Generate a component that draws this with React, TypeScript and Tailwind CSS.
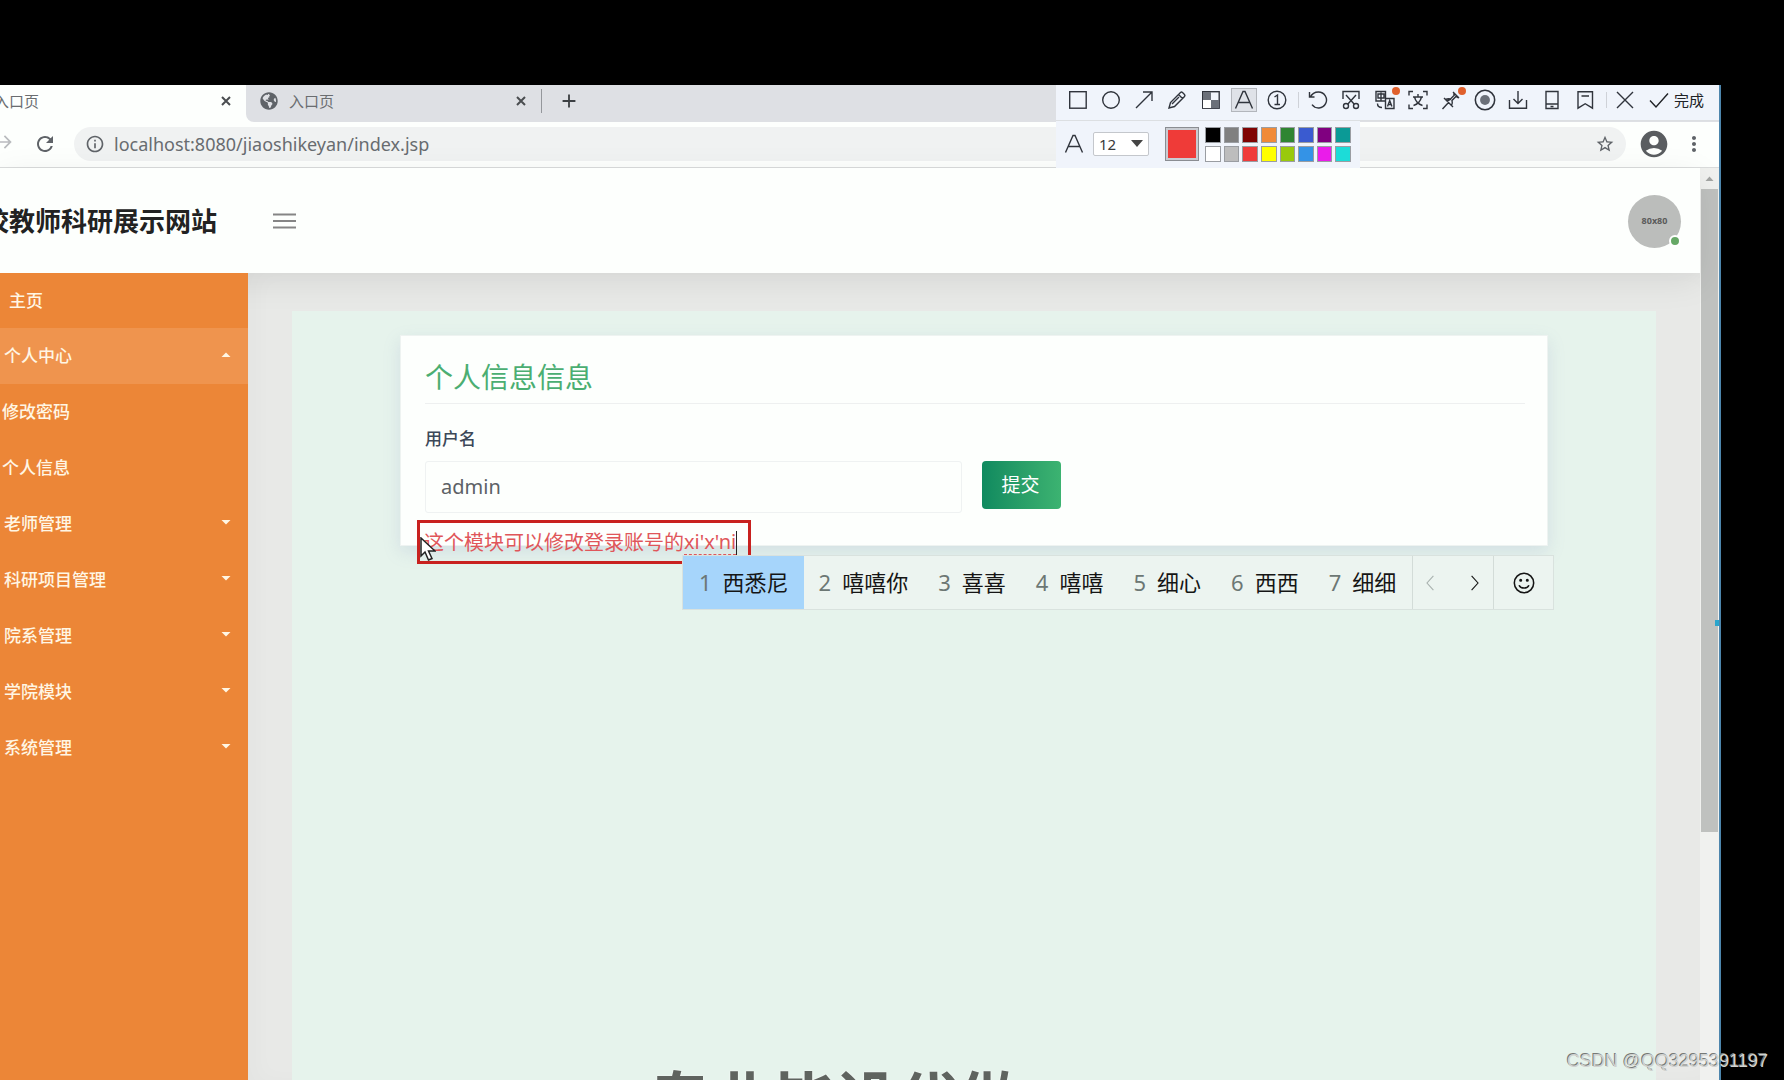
import type { ReactNode } from 'react';
import { FaGlobeAmericas } from 'react-icons/fa';
import { MdAccountCircle, MdMoreVert, MdRefresh, MdStarBorder, MdAdd, MdArrowBack, MdArrowForward, MdInfoOutline } from 'react-icons/md';

const menuItems = [
  { title: '主页', row: 'h-[55px] pl-[9px]', caret: '' },
  { title: '个人中心', row: 'h-14 pl-1 bg-[#ef944e]', caret: 'up' },
  { title: '修改密码', row: 'h-14 pl-[2px]', caret: '' },
  { title: '个人信息', row: 'h-14 pl-[2px]', caret: '' },
  { title: '老师管理', row: 'h-14 pl-1', caret: 'down' },
  { title: '科研项目管理', row: 'h-14 pl-1', caret: 'down' },
  { title: '院系管理', row: 'h-14 pl-1', caret: 'down' },
  { title: '学院模块', row: 'h-14 pl-1', caret: 'down' },
  { title: '系统管理', row: 'h-14 pl-1', caret: 'down' },
];

const candidates = ['西悉尼', '嘻嘻你', '喜喜', '嘻嘻', '细心', '西西', '细细'];

const swatches = [
  { name: 'black', color: 'bg-black' },
  { name: 'gray', color: 'bg-[#808080]' },
  { name: 'maroon', color: 'bg-[#7f0303]' },
  { name: 'orange', color: 'bg-[#f08a38]' },
  { name: 'green', color: 'bg-[#2f8532]' },
  { name: 'blue', color: 'bg-[#3a5bd0]' },
  { name: 'purple', color: 'bg-[#800080]' },
  { name: 'teal', color: 'bg-[#0b9a96]' },
  { name: 'white', color: 'bg-white' },
  { name: 'silver', color: 'bg-[#bdbdbd]' },
  { name: 'red', color: 'bg-[#ef3b3b]' },
  { name: 'yellow', color: 'bg-[#ffff00]' },
  { name: 'lime', color: 'bg-[#99c90c]' },
  { name: 'sky', color: 'bg-[#3493e6]' },
  { name: 'magenta', color: 'bg-[#ea1cea]' },
  { name: 'cyan', color: 'bg-[#1cdcd8]' },
];

function Icon({ children, size = 'size-5' }: { children: ReactNode; size?: string }) {
  return (
    <svg viewBox="0 0 20 20" fill="none" stroke="currentColor" strokeWidth="1.4" className={size}>
      {children}
    </svg>
  );
}

function LetterA({ size = 'size-5' }: { size?: string }) {
  return (
    <Icon size={size}>
      <path d="M1.5 18.5 9 1.5h2l7.500 17M4.300 12.500h11.400" />
    </Icon>
  );
}

const drawTools = [
  { name: '矩形', icon: <Icon><rect x="1.700" y="1.700" width="16.500" height="16.500" /></Icon> },
  { name: '椭圆', icon: <Icon><circle cx="10" cy="10" r="8.300" /></Icon> },
  { name: '箭头', icon: <Icon><path d="M2 18 18 2M9 2h9v9" /></Icon> },
  { name: '画笔', icon: <Icon><path d="m2 18 1.500-5.500L13.500 2.500a1.500 1.500 0 0 1 2 0l2 2a1.500 1.500 0 0 1 0 2L7.500 16.500 2 18ZM11.500 4.500l4 4M5 14l7-7" /></Icon> },
  {
    name: '马赛克',
    icon: (
      <Icon>
        <rect x="1.700" y="1.700" width="16.500" height="16.500" />
        <path d="M2 2h8v8H2zM10 10h8v8h-8z" fill="#6b7079" stroke="none" />
        <path d="M2 10h8v8H2z" fill="#fff" stroke="none" />
      </Icon>
    ),
  },
  { name: '文字', icon: <LetterA /> },
  { name: '序号', icon: <Icon><circle cx="10" cy="10" r="8.800" /><path d="M7.500 7 10.500 5v9.500M7.500 14.500h5.500" /></Icon> },
];

const moreTools = [
  { name: '撤销', dot: false, icon: <Icon><path d="M1.500 2v5h5M2 7.500C4 3.500 7 2 10.500 2a8 8 0 1 1-6.500 12.700" /></Icon> },
  {
    name: '裁剪',
    dot: false,
    icon: (
      <Icon>
        <path d="M2 9V1.500h16V9M5 5l8.300 9.300M15 5l-8.300 9.300" />
        <circle cx="5" cy="16" r="2.500" />
        <circle cx="15" cy="16" r="2.500" />
      </Icon>
    ),
  },
  {
    name: '翻译',
    dot: true,
    icon: (
      <Icon>
        <path d="M10 11H1V1.500h9.500V8M3 4h6v4H3zM6 2.500V11M10.500 8.500h8.500V18.500h-8.500zM12.500 16.500l2.200-6 2.200 6M13.300 14.500h3M2.500 13.500c0 2.500 1.500 4 4.500 4" />
      </Icon>
    ),
  },
  {
    name: '文字识别',
    dot: false,
    icon: (
      <Icon>
        <path d="M1 5.500V1.500h4M15 1.500h4v4M19 14.500v4h-4M5 18.500H1v-4M10 4v2.500M5 7h10M13.500 7C12.500 11 9 14.500 5.500 15.500M6.500 7c1 4 4.500 7.500 8 8.500" />
      </Icon>
    ),
  },
  { name: '钉住', dot: true, icon: <Icon><path d="m1.500 19 6-6.500M3 8l9 9M4.500 9.500c2-1 3.500-1 5-.5l4-4-1-1.500M10.500 15.500c1-2 1-3.500.5-5l4-4 2.500 1.500M12 2l6 6M6 11l4-2" /></Icon> },
  { name: '录制', dot: false, icon: <Icon size="size-[22px]"><circle cx="10" cy="10" r="8.800" /><circle cx="10" cy="10" r="4.500" fill="#6b7079" stroke="none" /></Icon> },
  { name: '下载', dot: false, icon: <Icon><path d="M1.500 10v8.300h17V10M10 1v12.500M5.500 9l4.500 4.500L14.500 9" /></Icon> },
  { name: '手机', dot: false, icon: <Icon><path d="M4 1.500h12v17H4zM4 14h12M8.500 16.500h3" /></Icon> },
  { name: '收藏', dot: false, icon: <Icon><path d="M3 1.700h14.500v16.500l-7.300-4.500L3 18.200zM6.500 6h7.500" /></Icon> },
];

function Tab({ active }: { active: boolean }) {
  return (
    <div className={active ? 'flex h-full w-[295px] items-center bg-[#fdfffd] pb-[5px] pl-[14px] pr-[10px]' : 'flex h-full w-[295px] items-center rounded-bl-lg bg-[#dee0e4] pb-[5px] pl-[14px] pr-[10px]'}>
      <FaGlobeAmericas className="size-[18px] text-[#5f6368]" />
      <span className="ml-[11px] flex-1 text-[15px] leading-6 text-[#6a6d70]">入口页</span>
      <button aria-label="关闭标签页" className="flex size-5 items-center justify-center text-[#4a4d50]">
        <svg viewBox="0 0 10 10" className="size-[10px]"><path d="m1 1 8 8M9 1 1 9" stroke="currentColor" strokeWidth="2" /></svg>
      </button>
    </div>
  );
}

function BrowserBar() {
  return (
    <div className="shrink-0">
      <div className="flex h-[37px] bg-[#fdfffd]">
        <div className="-ml-[49px] flex"><Tab active /><Tab active={false} /></div>
        <div className="flex flex-1 items-center bg-[#dee0e4] pb-[5px]">
          <span className="h-6 w-px bg-[#94979b]"></span>
          <button aria-label="新标签页" className="ml-4 text-[#3c4043]"><MdAdd className="size-[22px]" /></button>
        </div>
      </div>
      <div className="flex h-[46px] items-center border-b border-[#dadcdc] bg-[#fdfffd] pb-px pr-[13px]">
        <div className="-ml-[55px] flex text-[#5f6368]">
          <button aria-label="后退" className="flex w-10 justify-center text-[#b9bbbe]"><MdArrowBack className="size-5" /></button>
          <button aria-label="前进" className="flex w-10 justify-center text-[#b9bbbe]"><MdArrowForward className="size-5" /></button>
          <button aria-label="刷新" className="flex w-10 justify-center"><MdRefresh className="size-6" /></button>
        </div>
        <div className="ml-[9px] flex h-[34px] flex-1 items-center rounded-full bg-[#f0f2f2] px-[11px]">
          <MdInfoOutline className="size-5 text-[#5f6368]" />
          <input aria-label="地址" defaultValue="localhost:8080/jiaoshikeyan/index.jsp" className="ml-[9px] h-7 min-w-0 flex-1 bg-transparent pb-px text-[18px] leading-6 text-[#686c70]" />
          <button aria-label="收藏此页" className="text-[#5f6368]"><MdStarBorder className="size-5" /></button>
        </div>
        <button aria-label="用户" className="ml-3 text-[#5a5d60]"><MdAccountCircle className="size-8" /></button>
        <button aria-label="更多" className="ml-3 text-[#5f6368]"><MdMoreVert className="size-6" /></button>
      </div>
    </div>
  );
}

function CaptureToolbar() {
  return (
    <div className="absolute right-0 top-0 z-30 w-[663px] text-[#30343c]">
      <div className="flex h-[36px] items-center border-b border-[#dcdfe2] bg-[#f0f4fb] pb-[6px] pl-[5px]">
        <div className="grid w-[233px] grid-cols-7">
          {drawTools.map((tool) => (
            <button key={tool.name} aria-label={tool.name} className={tool.name === '文字' ? 'mx-auto flex h-6 w-[26px] items-center justify-center border border-[#b3b6bc] bg-[#dfe2e8]' : 'mx-auto flex h-6 w-[26px] items-center justify-center'}>
              {tool.icon}
            </button>
          ))}
        </div>
        <span className="ml-1 h-4 w-px bg-[#cfd2d8]"></span>
        <div className="ml-[2px] grid w-[301px] grid-cols-9">
          {moreTools.map((tool) => (
            <button key={tool.name} aria-label={tool.name} className="relative mx-auto flex size-6 items-center justify-center">
              {tool.icon}
              {tool.dot && <span className="absolute -right-[3px] -top-px size-2 rounded-full bg-[#e0602c]"></span>}
            </button>
          ))}
        </div>
        <span className="ml-1 h-4 w-px bg-[#cfd2d8]"></span>
        <button aria-label="取消" className="ml-2"><Icon><path d="m2 2 16 16M18 2 2 18" /></Icon></button>
        <button className="ml-[14px] flex items-center gap-[5px] text-[15px] leading-5 text-[#202226]">
          <Icon><path d="m1 10.500 6 6.500L19 3.500" /></Icon>
          完成
        </button>
      </div>
      <div className="flex h-[47px] w-[304px] items-center bg-[#f0f4fb] pb-px pl-2">
        <LetterA />
        <div className="relative ml-[9px] flex">
          <select aria-label="字号" className="h-6 w-14 appearance-none rounded-[2px] border border-[#c4c7cc] bg-white pl-[5px] text-[15px] leading-5 text-[#3a3a3a]">
            <option>12</option>
          </select>
          <svg viewBox="0 0 12 7" className="pointer-events-none absolute right-[6px] top-[8px] h-[7px] w-3"><path d="M0 0h12L6 7z" fill="#444" /></svg>
        </div>
        <button aria-label="当前颜色" className="ml-4 size-[34px] border border-[#8a8d92] bg-[#ef3b38] shadow-[inset_0_0_0_2px_#c9ccd2]"></button>
        <div className="ml-[6px] grid w-[146px] grid-cols-8 gap-[3px]">
          {swatches.map((s) => (
            <button key={s.name} aria-label={s.name} className={`h-4 border border-[#9a9da2] ${s.color}`}></button>
          ))}
        </div>
      </div>
    </div>
  );
}

function Sidebar() {
  return (
    <nav className="z-20 w-[248px] shrink-0 bg-[#ec8637] text-[17px] font-medium text-[#fff6e4]">
      {menuItems.map((item) => (
        <a key={item.title} href="#" className={`flex items-center justify-between pr-[17px] leading-6 ${item.row}`}>
          {item.title}
          {item.caret && (
            <svg viewBox="0 0 10 5" className="mb-1 h-[5px] w-[10px]">
              <path d={item.caret === 'up' ? 'M.500 5 5 .500 9.500 5z' : 'M.500 0h9L5 4.500z'} fill="currentColor" />
            </svg>
          )}
        </a>
      ))}
    </nav>
  );
}

function Annotation() {
  return (
    <div className="absolute left-4 top-[184px] flex h-11 w-[334px] items-center border-[3px] border-[#c8211f] pl-1 pt-px text-[20px] leading-6 text-[#e0565a]">
      <span>这个模块可以修改登录账号的</span>
      <span className="border-b border-dashed border-[#e0565a]">xi'x'ni</span>
      <span className="h-6 w-px bg-[#222]"></span>
    </div>
  );
}

function CandidateBar() {
  return (
    <div className="absolute left-[281px] top-[219px] flex h-[55px] w-[872px] border border-[#d9e2de] bg-[#ecf4f0] text-[22px] leading-8 text-[#151515]">
      {candidates.map((word, index) => (
        <button key={word} className={index === 0 ? 'flex items-center gap-[11px] whitespace-nowrap bg-[#a6d5fb] pb-[2px] pl-4 pr-[15px]' : 'flex items-center gap-[11px] whitespace-nowrap px-[15px] pb-[2px]'}>
          <span className="text-[#6c7774]">{index + 1}</span>
          {word}
        </button>
      ))}
      <div className="ml-auto flex items-center border-l border-[#d3dcd8]">
        <button aria-label="上一页" className="flex w-9 justify-center text-[#a9b2af]"><Icon size="size-4"><path d="m13 1-8 9 8 9" /></Icon></button>
        <button aria-label="下一页" className="flex w-[44px] justify-center pl-[6px]"><Icon size="size-4"><path d="m7 1 8 9-8 9" /></Icon></button>
      </div>
      <button aria-label="表情" className="flex w-[60px] items-center justify-center border-l border-[#d3dcd8]">
        <Icon size="size-[22px]">
          <circle cx="10" cy="10" r="8.800" />
          <path d="M5.500 12c1.500 3.500 7.500 3.500 9 0" />
          <circle cx="7" cy="7.500" r=".700" fill="currentColor" />
          <circle cx="13" cy="7.500" r=".700" fill="currentColor" />
        </Icon>
      </button>
    </div>
  );
}

function ProfileCard() {
  return (
    <form className="relative mx-[108px] border border-[#eef3f1] bg-[#fdfffd] pb-8 pl-6 pr-[22px] pt-[19px] shadow-[0_6px_16px_rgba(120,140,190,0.18)]">
      <h2 className="border-b border-[#eef0f0] pb-1 text-[28px] leading-[44px] text-[#4bae72]">个人信息信息</h2>
      <label htmlFor="username" className="mt-[23px] block text-[17px] font-medium leading-6 text-[#3c4858]">用户名</label>
      <div className="mt-[10px] flex items-start gap-5">
        <input id="username" defaultValue="admin" className="h-[52px] w-[537px] rounded-[3px] border border-[#eff2f2] bg-[#fdfffd] px-[15px] pb-[2px] text-[20px] leading-6 text-[#5c6166]" />
        <button type="button" className="h-12 w-[79px] rounded-[4px] bg-linear-to-r from-[#0f8a5f] to-[#3cb371] pr-[2px] text-[19px] leading-6 text-white">提交</button>
      </div>
      <Annotation />
      <CandidateBar />
      <svg viewBox="0 0 16 24" className="absolute left-[19px] top-[201px] h-6 w-4">
        <path d="M1 1v18l4-4 3.500 8 3.500-1.500L8.500 14H15z" fill="#fff" stroke="#222" strokeWidth="1.500" />
      </svg>
    </form>
  );
}

function SitePage() {
  return (
    <div className="flex min-w-0 flex-1 flex-col">
      <header className="z-10 flex h-[105px] shrink-0 items-center bg-[#fdfffd] pr-[19px] pt-px shadow-[0_8px_32px_rgba(0,0,0,0.08)]">
        <div className="flex w-[217px] justify-end">
          <h1 className="whitespace-nowrap text-[26px] font-bold leading-9 text-[#222]">高校教师科研展示网站</h1>
        </div>
        <button aria-label="菜单" className="ml-[56px]">
          <svg viewBox="0 0 23 16" className="h-4 w-[23px]"><path d="M0 1.500h23M0 8h23M0 14.500h23" stroke="#858585" strokeWidth="2" /></svg>
        </button>
        <div className="relative ml-auto flex size-[53px] items-center justify-center rounded-full bg-[#bbbdbb] text-[9px] font-bold leading-3 text-[#5a5a5a]">
          80x80
          <span className="absolute bottom-[1px] right-0 size-3 rounded-full border-2 border-white bg-[#66a866]"></span>
        </div>
      </header>
      <div className="flex min-h-0 flex-1">
        <Sidebar />
        <main className="min-w-0 flex-1 bg-[#e8e9e7] px-[44px] pt-[38px] shadow-[inset_10px_0_20px_rgba(0,0,0,0.02)]">
          <div className="h-full bg-[#e6f3ec] pt-6">
            <ProfileCard />
            <p className="mt-[522px] whitespace-nowrap pl-[357px] text-[62px] font-bold leading-[64px] text-[#5f635f] [text-shadow:0_0_2px_#fff]">专业毕设代做</p>
          </div>
        </main>
      </div>
    </div>
  );
}

export default function App() {
  return (
    <div className="relative flex h-screen flex-col overflow-hidden bg-black pr-[63px] pt-[85px] font-['Noto_Sans','Noto_Sans_CJK_SC',sans-serif]">
      <div className="relative flex min-h-0 flex-1 flex-col overflow-hidden border-r-2 border-[#4d86ad] bg-white">
        <BrowserBar />
        <CaptureToolbar />
        <div className="flex min-h-0 flex-1">
          <SitePage />
          <div className="flex w-[19px] shrink-0 flex-col bg-[#f0f1ef] px-px">
            <svg viewBox="0 0 17 21" className="h-[21px] w-[17px]"><path d="M4.500 13h8l-4-4.500z" fill="#a3a5a3" /></svg>
            <div className="h-[643px] bg-[#bfc1bf]"></div>
          </div>
        </div>
        <span className="absolute right-0 top-[535px] h-[6px] w-1 bg-[#2aa5cc]"></span>
      </div>
      <span className="absolute bottom-[7px] right-4 z-40 font-['Liberation_Sans',sans-serif] text-[18px] leading-6 text-[#d0d2d0] [text-shadow:-1px_-1px_0_#777a77]">CSDN @QQ3295391197</span>
    </div>
  );
}
